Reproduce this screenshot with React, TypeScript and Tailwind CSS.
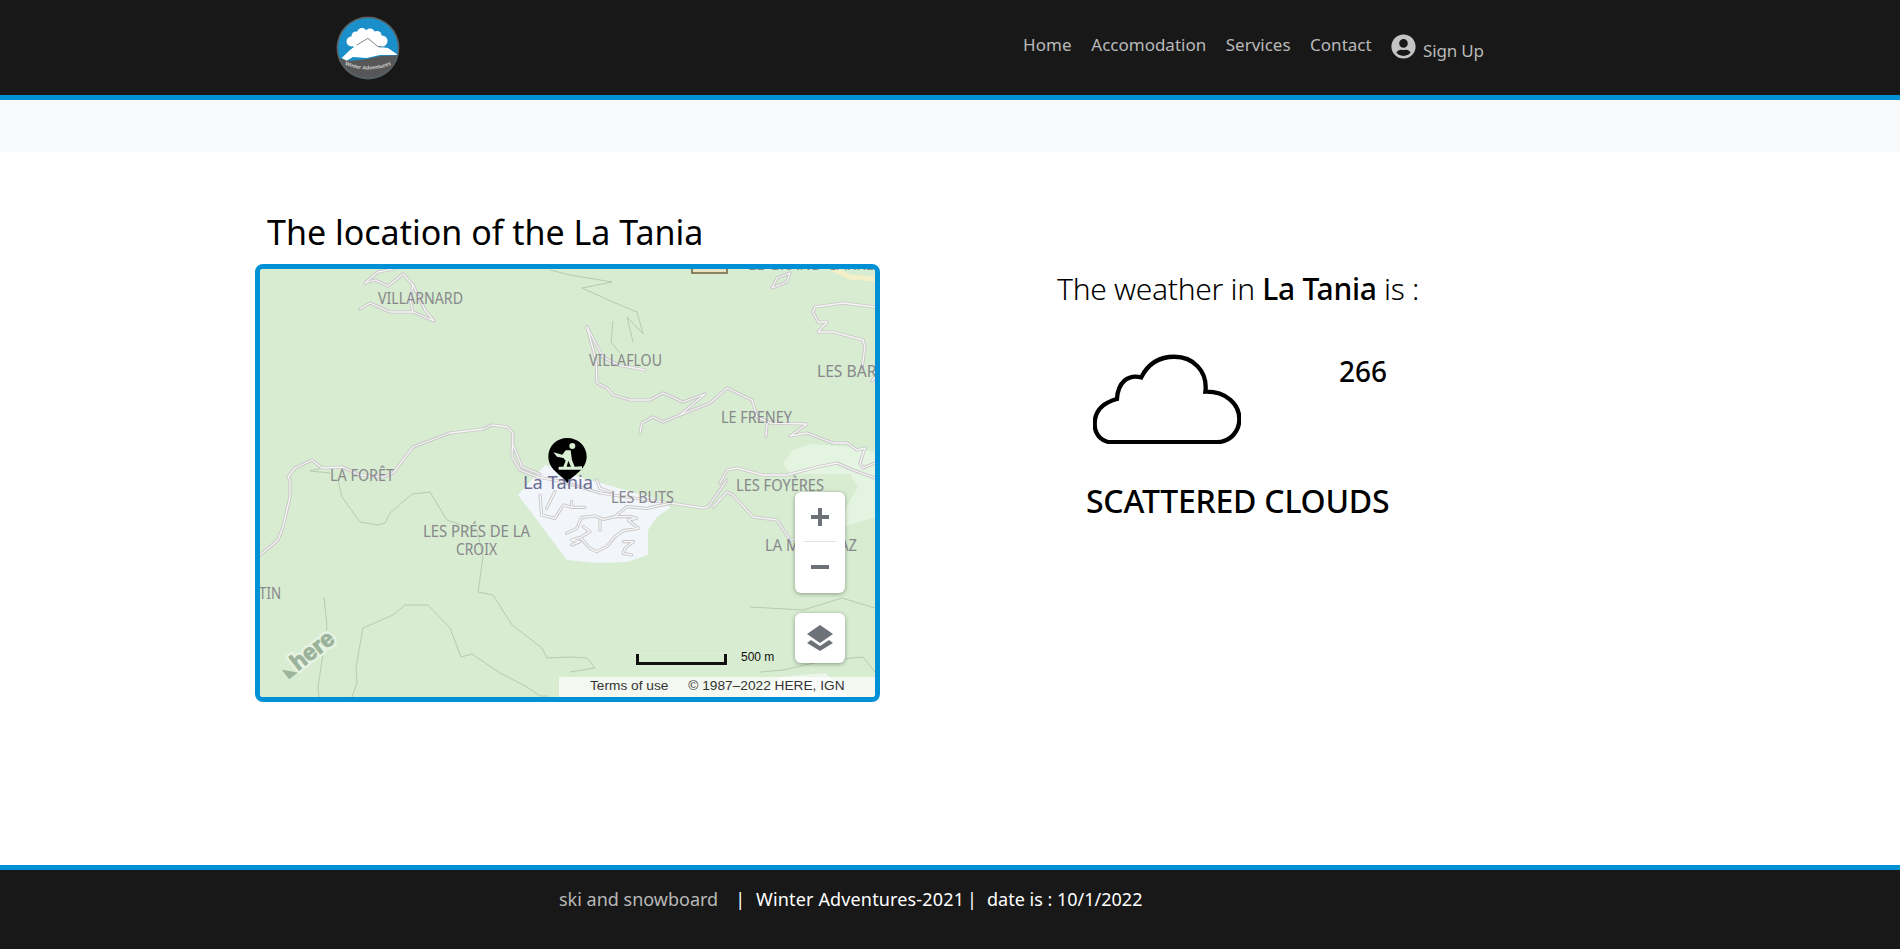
import { FaUserCircle } from "react-icons/fa";

const roads: string[] = [
  "0,286 18,271 23,258 30,228 30,211 28,208 35,199 52,191 62,199 82,198 100,206 123,208 133,204 153,178 190,164 223,160 232,156 247,158 253,164 252,188 260,201 277,208 300,212 340,224 380,230 410,234 443,239 448,238 467,211",
  "253,176 262,198 280,205",
  "460,214 467,201 477,199 503,206 527,206 557,198 577,194 593,201 615,209",
  "453,238 467,223 473,226 493,248 517,251 530,271 545,268",
  "105,14 115,11 128,17 143,5 153,16 165,41 174,52 153,43 130,43 110,34 100,40",
  "105,14 118,3 133,0",
  "153,16 150,30 153,43",
  "327,58 343,88 358,96 385,101",
  "327,58 336,91 337,114 347,119 353,126 370,131 390,131 403,124 423,133 445,125 420,146 403,153 393,148 382,154 380,164",
  "420,146 450,134 467,119 492,131 497,148 510,154 547,155 530,167 547,164 573,174 587,174 597,181 605,179 600,194 603,199 615,194",
  "507,154 506,168",
  "615,38 583,34 555,38 553,43 558,53 567,53 558,63 573,63 603,71 605,78 602,99",
  "530,4 527,13 512,19 517,9 530,4",
  "612,112 615,108",
];

/* village streets, in a 3x grid placed over the village */
const townRoads: string[] = [
  "510,250 440,265 380,260 345,290 310,298 285,288 245,292 230,325 200,340",
  "300,300 300,330",
  "345,290 390,290 410,295 385,300 415,325 370,332 345,350 320,380 290,395 270,385 240,352 215,360 240,365 215,375",
  "370,365 400,365 375,385 370,400 395,405",
  "120,225 125,285 165,295 190,255 215,262 255,262",
  "215,245 215,262",
  "165,215 140,265",
  "250,320 270,335 245,350",
  "290,180 300,205 330,215",
];

const contours: string[] = [
  "310,6 352,13 322,19 353,33 377,43 383,65 367,48 373,73",
  "353,52 351,73 360,84",
  "78,211 82,228 100,253 118,256 125,254 130,244 152,225 170,223 187,251 217,261 223,288 218,323 233,326 252,356 282,379 287,389 310,388 327,389 335,399 310,403",
  "64,328 67,358 58,418 59,428",
  "92,428 97,414 96,398 103,359 133,346 145,336 168,336 190,359 201,388 212,385 240,404 267,418 280,427 288,427",
  "490,338 543,341 582,329 615,339",
  "500,403 523,401 563,392 603,388 615,403",
  "70,204 50,202 62,199",
  "290,1 310,6",
];

type Label = [string, number, number, number];
const labels: Label[] = [
  ["VILLARNARD", 118, 35, 85],
  ["VILLAFLOU", 329, 97, 73],
  ["LES BARRIÈRES", 557, 108, 110],
  ["LE FRENEY", 461, 154, 71],
  ["LA FORÊT", 70, 212, 64],
  ["LES BUTS", 351, 234, 63],
  ["LES FOYÈRES", 476, 222, 88],
  ["LA MORENAZ", 505, 282, 92],
  ["LES PRÉS DE LA", 163, 268, 107],
  ["CROIX", 196, 286, 41],
  ["TIN", -1, 330, 22],
  ["LE GRAND-CARREY", 488, 1, 135],
];

function MapArt() {
  return (
    <svg width="615" height="428" viewBox="0 0 615 428" className="block">
      <rect width="615" height="428" fill="#d7ecd0" />
      <polygon
        points="523,194 533,181 550,175 590,178 615,183 615,248 572,262 598,218 590,205 530,205"
        fill="#e3f4e0"
      />
      <polygon
        points="285,196 258,226 277,251 307,291 337,294 367,293 388,286 388,261 397,248 410,239 407,233 323,209"
        fill="#f2f6fa"
      />
      <polygon points="500,428 520,408 565,404 590,428" fill="#eef6ec" />
      <polyline points="573,0 590,8 615,10" fill="none" stroke="#f3efc8" strokeWidth="5" />
      <rect x="432" y="-6" width="35" height="10" fill="#e9e2c0" stroke="#6b6240" strokeWidth="1.5" />
      {contours.map((c) => (
        <polyline key={c} points={c} fill="none" stroke="#b9cab3" strokeWidth="1" />
      ))}
      {roads.map((r) => (
        <polyline key={r} points={r} fill="none" stroke="#c9c6ca" strokeWidth="3.2" strokeLinejoin="round" strokeLinecap="round" />
      ))}
      {roads.map((r) => (
        <polyline key={`i${r}`} points={r} fill="none" stroke="#f6f6f4" strokeWidth="1.3" strokeLinejoin="round" strokeLinecap="round" />
      ))}
      <g transform="translate(240,151) scale(0.3333)">
        {townRoads.map((r) => (
          <polyline key={r} points={r} fill="none" stroke="#c9c6ca" strokeWidth="9.6" strokeLinejoin="round" strokeLinecap="round" />
        ))}
        {townRoads.map((r) => (
          <polyline key={`i${r}`} points={r} fill="none" stroke="#f8f8f8" strokeWidth="4" strokeLinejoin="round" strokeLinecap="round" />
        ))}
      </g>
      {labels.map(([t, x, y, w]) => (
        <text
          key={t}
          x={x}
          y={y}
          textLength={w}
          lengthAdjust="spacingAndGlyphs"
          fontFamily="'Noto Sans', sans-serif"
          fontSize="15.5"
          fill="#87878c"
        >
          {t}
        </text>
      ))}
      <g transform="translate(240,151) scale(0.3333)">
        <path
          d="M202,190 C192,168 145,152 145,110 C145,78 170,54 202,54 C234,54 260,78 260,110 C260,152 212,168 202,190 Z"
          fill="#000"
        />
        <circle cx="217" cy="78" r="9" fill="#d9eed2" />
        <path
          d="M160,97 L187,104 L197,91 L212,91 L216,120 L224,140 L246,139 L246,149 L176,149 L176,140 L190,140 L197,122 L190,114 L171,110 Z"
          fill="#d9eed2"
        />
        <path d="M205,122 L200,140 L213,140 Z" fill="#000" />
      </g>
      <text
        x="263"
        y="220"
        textLength="70"
        lengthAdjust="spacingAndGlyphs"
        fontFamily="'Noto Sans', sans-serif"
        fontSize="18.5"
        fill="#6b6d94"
      >
        La Tania
      </text>
      <g transform="translate(52,381) rotate(-38)">
        <text
          x="0"
          y="8"
          textAnchor="middle"
          fontFamily="'Liberation Sans', sans-serif"
          fontWeight="700"
          fontSize="23"
          fill="#9cb39c"
          stroke="#e6f3e2"
          strokeWidth="6"
          paintOrder="stroke"
        >
          here
        </text>
        <text
          x="0"
          y="8"
          textAnchor="middle"
          fontFamily="'Liberation Sans', sans-serif"
          fontWeight="700"
          fontSize="23"
          fill="#9cb39c"
          stroke="#9cb39c"
          strokeWidth="0.9"
        >
          here
        </text>
        <polygon points="-36,-3 -25,9 -36,9" fill="#9cb39c" />
      </g>
    </svg>
  );
}

function Logo() {
  return (
    <svg width="66" height="66" viewBox="0 0 66 66" className="block">
      <defs>
        <clipPath id="logoClip">
          <circle cx="33" cy="33" r="30" />
        </clipPath>
        <path id="logoArc" d="M8,49 Q33,60 58,49" fill="none" />
      </defs>
      <circle cx="33" cy="33" r="31.5" fill="#5e5e5e" />
      <g clipPath="url(#logoClip)">
        <rect width="66" height="66" fill="#1b8fc9" />
        <path d="M0,42 L15,46 L32,44 L45,41 L66,40 V66 H0 Z" fill="#575757" />
        <g fill="#fff">
          <circle cx="16.5" cy="26.5" r="5" />
          <circle cx="21" cy="21" r="4.5" />
          <circle cx="27" cy="18" r="5" />
          <circle cx="35" cy="18.5" r="5" />
          <circle cx="42" cy="20.5" r="4.5" />
          <circle cx="47" cy="26" r="5.5" />
          <rect x="18" y="20" width="26" height="12" />
        </g>
        <path
          d="M6.7,43 L15,35 L21.7,30 L33,23.3 L43,31.7 L53,33 L63,40 L45,40 L31.7,43 L18,42 L11.7,45.7 Z"
          fill="#fff"
        />
        <path d="M21.7,30 L33,23.3 L43,31.7 L47,32" stroke="#6d7a80" strokeWidth="0.9" fill="none" />
      </g>
      <text fontFamily="'Liberation Sans', sans-serif" fontSize="5.4" fontWeight="700" fill="#cfcfcf">
        <textPath href="#logoArc" startOffset="50%" textAnchor="middle">
          Winter Adventures
        </textPath>
      </text>
    </svg>
  );
}

function Cloud() {
  return (
    <svg width="148" height="90" viewBox="160 280 445 270" className="block">
      <path
        d="M215,545 H530 C575,545 600,510 600,475 C600,430 560,392 498,393 C505,330 460,288 405,288 C360,288 325,310 305,350 C265,340 235,365 232,415 C195,425 165,445 165,490 C165,525 190,545 215,545 Z"
        fill="none"
        stroke="#000"
        strokeWidth="13"
        strokeLinejoin="miter"
      />
    </svg>
  );
}

export default function App() {
  return (
    <div className="flex h-[951px] flex-col bg-white font-['Noto_Sans',sans-serif] text-black">
      <header className="flex h-[100px] shrink-0 items-start border-b-[5px] border-[#0090d6] bg-[#181818] pl-[335px] text-[17px] text-[#b9b9b9]">
        <div className="mt-[15px]">
          <Logo />
        </div>
        <nav className="ml-[622px] flex items-start gap-[19.5px] pt-[32px]">
          <a className="tracking-[0.1px]">Home</a>
          <a>Accomodation</a>
          <a>Services</a>
          <a>Contact</a>
          <span className="flex items-start">
            <FaUserCircle className="mt-[2px] text-[25px] text-[#c4c4c4]" />
            <span className="ml-[7px] mt-[6px] tracking-[-0.2px]">Sign Up</span>
          </span>
        </nav>
      </header>
      <div className="h-[52px] shrink-0 bg-[#f8f9fa]" />
      <main className="flex flex-1 items-start pl-[255px]">
        <section className="w-[625px]">
          <h1 className="pl-[12px] pt-[48px] text-[34px] leading-[64px]">
            The location of the La Tania
          </h1>
          <div className="relative h-[438px] overflow-hidden rounded-[8px] border-[5px] border-[#0090d6]">
            <MapArt />
            <div className="absolute left-[535px] top-[223px] flex h-[101px] w-[50px] flex-col items-center rounded-[6px] bg-white shadow-[0_1px_4px_rgba(0,0,0,0.35)]">
              <div className="flex h-[50px] w-[32px] items-center justify-center border-b border-[#e3e3e3]">
                <svg width="18" height="18" viewBox="0 0 18 18">
                  <path d="M9 0V18M0 9H18" stroke="#6d7178" strokeWidth="4" />
                </svg>
              </div>
              <div className="flex h-[50px] items-center justify-center">
                <svg width="18" height="18" viewBox="0 0 18 18">
                  <path d="M0 9H18" stroke="#6d7178" strokeWidth="4" />
                </svg>
              </div>
            </div>
            <div className="absolute left-[535px] top-[344px] flex h-[50px] w-[50px] items-center justify-center rounded-[6px] bg-white shadow-[0_1px_4px_rgba(0,0,0,0.35)]">
              <svg width="28" height="27" viewBox="0 0 28 27">
                <path d="M14 0L27 9L14 18L1 9Z" fill="#6d7178" />
                <path d="M5 15L1 18L14 26L27 18L23 15L14 21Z" fill="#6d7178" />
              </svg>
            </div>
            <div className="absolute left-[376px] top-[385px] h-[11px] w-[91px] border-x-[3px] border-b-[3px] border-[#111] shadow-[0_0_1px_#fff]" />
            <span className="absolute left-[481px] top-[381px] font-['Liberation_Sans',sans-serif] text-[12px] leading-[14px] text-[#111]">
              500 m
            </span>
            <div className="absolute bottom-0 left-[299px] right-0 flex h-[20px] items-center gap-[20px] bg-white/70 pb-[1px] pl-[31px] font-['Liberation_Sans',sans-serif] text-[13.7px] text-[#333]">
              <span>Terms of use</span>
              <span>© 1987–2022 HERE, IGN</span>
            </div>
          </div>
        </section>
        <section className="ml-[177px] w-[420px] pt-[119px]">
          <h2 className="text-[30px] font-light leading-[36px] tracking-[-0.3px]">
            The weather in <b className="font-medium">La Tania</b> is :
          </h2>
          <div className="flex items-start">
            <div className="ml-[36px] mt-[47px]">
              <Cloud />
            </div>
            <div className="ml-[98px] mt-[44px] text-[28px] font-medium leading-[40px]">266</div>
          </div>
          <p className="ml-[29px] mt-[37px] whitespace-nowrap text-[32px] font-medium leading-[40px] tracking-[-0.25px]">
            SCATTERED CLOUDS
          </p>
        </section>
      </main>
      <footer className="mb-[2px] flex h-[84px] shrink-0 items-start border-t-[5px] border-[#0090d6] bg-[#181818] pl-[559px] pt-[16px] text-[18px] leading-[26px] text-white">
        <span className="text-[#b9b9b9]">ski and snowboard</span>
        <span className="ml-[17px]">|</span>
        <span className="ml-[11px] tracking-[0.15px]">Winter Adventures-2021</span>
        <span className="ml-[3px]">|</span>
        <span className="ml-[10px]">date is : 10/1/2022</span>
      </footer>
    </div>
  );
}
